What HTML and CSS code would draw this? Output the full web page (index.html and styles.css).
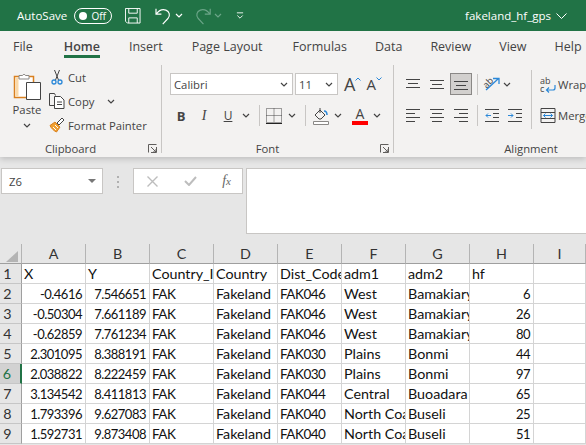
FILE: index.html
```html
<!DOCTYPE html>
<html lang="en">
<head>
    <meta charset="UTF-8">
    <meta name="viewport" content="width=device-width, initial-scale=1.0">
    <title>fakeland_hf_gps</title>
    <link rel="stylesheet" href="styles.css">
</head>
<body>
    <svg class="sprite" width="0" height="0">
        <symbol id="chev" viewBox="0 0 8 5"><path d="M1 1l3 3 3-3" fill="none" stroke="currentColor" stroke-width="1.2"/></symbol>
        <symbol id="launch" viewBox="0 0 9 9"><path d="M.5 8.5V.5h8M8.5 3v5.5H3M3 3l5 5M8 5v3H5" fill="none" stroke="#605e5c"/></symbol>
    </svg>

    <header class="titlebar">
        <span class="autosave">AutoSave</span>
        <span class="toggle"><i class="knob"></i><b>Off</b></span>
        <svg class="qat-save" width="16" height="16" viewBox="0 0 17 17" fill="none" stroke="#fff"><path d="M.5.500h15.500v15.500H2.500l-2-2zM4 .5v5h9v-5M4 16v-5.500h9V16"/></svg>
        <svg class="qat-undo" width="20" height="18" viewBox="0 0 22 20" fill="none" stroke="#fff" stroke-width="1.300"><path d="M1 2v6h6M1.500 7.500C5 3 9 2.500 12 3.500c4 1.500 5 6 2.500 9L8.500 19"/></svg>
        <svg class="qat-chev" width="8" height="5"><use href="#chev"/></svg>
        <svg class="qat-redo" width="18" height="18" viewBox="0 0 20 20" fill="none" stroke="#6ba588" stroke-width="1.300"><path d="M18 2v6h-6M17.500 7.500C14 3 10 2.500 7 3.500c-4 1.500-5 6-2.500 9l6 6.500"/></svg>
        <svg class="qat-chev off" width="8" height="5"><use href="#chev"/></svg>
        <svg class="qat-more" width="8" height="9" viewBox="0 0 9 9" fill="none" stroke="#fff"><path d="M1 1.500h7M1.500 4.500L4.500 7.500 7.500 4.500"/></svg>
        <span class="filename">fakeland_hf_gps</span>
        <svg class="file-chev" width="11" height="6" viewBox="0 0 11 6" fill="none" stroke="#fff"><path d="M.5.500l5 5 5-5"/></svg>
    </header>

    <nav class="tabs">
        <span class="tab t-file">File</span>
        <span class="tab t-home">Home</span>
        <span class="tab t-insert">Insert</span>
        <span class="tab t-layout">Page Layout</span>
        <span class="tab t-formulas">Formulas</span>
        <span class="tab t-data">Data</span>
        <span class="tab t-review">Review</span>
        <span class="tab t-view">View</span>
        <span class="tab t-help">Help</span>
    </nav>

    <section class="ribbon">
        <div class="group g-clip">
            <div class="group-body clip-body">
                <div class="paste">
                    <svg width="28" height="27" viewBox="0 0 28 27">
                        <path d="M1.500 3.500h19v21h-19z" fill="#fff" stroke="#d9801f" stroke-width="1.500"/>
                        <path d="M2.500 4.500h3v19h-3z" fill="#fbd9a8"/>
                        <path d="M6 4V2.500h3.500C10 1 12 1 12.500 2.500H16V6H6z" fill="#fff" stroke="#8a8886"/>
                        <path d="M13.500 9.500h14v17h-14z" fill="#fff" stroke="#444"/>
                    </svg>
                    <span class="paste-label">Paste</span>
                    <svg class="ink" width="8" height="5"><use href="#chev"/></svg>
                </div>
                <div class="clip-list">
                    <div class="clip-row">
                        <svg width="16" height="16" viewBox="0 0 16 16" fill="none"><path d="M5.500 1l4 10M10.500 1l-4 10" stroke="#444"/><circle cx="5" cy="13" r="2" stroke="#2b88d8" stroke-width="1.300"/><circle cx="11" cy="13" r="2" stroke="#2b88d8" stroke-width="1.300"/></svg>
                        <span>Cut</span>
                    </div>
                    <div class="clip-row">
                        <svg width="16" height="16" viewBox="0 0 16 16" fill="none" stroke="#444"><path d="M6.500 12.500H.5v-12h5l1 2"/><path d="M5.500 3.500h6l3.500 3.500v8.500H5.500z" fill="#fff"/><path d="M8 9h5M8 11.500h5"/></svg>
                        <span>Copy</span>
                        <svg class="copy-chev ink" width="8" height="5"><use href="#chev"/></svg>
                    </div>
                    <div class="clip-row">
                        <svg width="16" height="16" viewBox="0 0 16 16"><path d="M1 8.500L6 5l5 5-3.500 5C5 14 2 11 1 8.500z" fill="#f0a030" stroke="#d9801f"/><path d="M4 10l3 3M6 8l3 3" stroke="#fff"/><path d="M8 6l5-5 2 2-5 5z" fill="#fff" stroke="#444"/></svg>
                        <span>Format Painter</span>
                    </div>
                </div>
            </div>
            <div class="group-label"><span>Clipboard</span><svg width="9" height="9"><use href="#launch"/></svg></div>
        </div>

        <div class="group g-font">
            <div class="group-body">
                <div class="font-row">
                    <div class="combo c-name"><span>Calibri</span><svg class="ink" width="8" height="5"><use href="#chev"/></svg></div>
                    <div class="combo c-size"><span>11</span><svg class="ink" width="8" height="5"><use href="#chev"/></svg></div>
                    <span class="grow">A<svg width="6" height="4" viewBox="0 0 6 4" fill="none" stroke="#2b88d8"><path d="M.5 3.500L3 1l2.500 2.500"/></svg></span>
                    <span class="shrink">A<svg width="6" height="4" viewBox="0 0 6 4" fill="none" stroke="#2b88d8"><path d="M.5.500L3 3 5.500.500"/></svg></span>
                </div>
                <div class="font-tools">
                    <b class="t-b">B</b>
                    <i class="t-i">I</i>
                    <u class="t-u">U</u>
                    <svg class="ink" width="8" height="5"><use href="#chev"/></svg>
                    <span class="sep"></span>
                    <svg width="16" height="16" viewBox="0 0 16 16" fill="none"><path d="M.5.500h15v14H.5zM8 .5v14M.5 7.500h15" stroke="#444" stroke-dasharray="1 1"/><path d="M0 15.500h16" stroke="#222"/></svg>
                    <svg class="ink" width="8" height="5"><use href="#chev"/></svg>
                    <span class="sep"></span>
                    <svg width="16" height="18" viewBox="0 0 16 18" fill="none"><path d="M2 8l5-5 5 5-4 4H6z" stroke="#444"/><path d="M7 1v5" stroke="#444"/><path d="M11 4c2 0 3 2 3 4" stroke="#2b88d8" stroke-width="1.500"/><path d="M.5 14.500h15v3H.5z" fill="#fff" stroke="#8a8886"/></svg>
                    <svg class="ink" width="8" height="5"><use href="#chev"/></svg>
                    <span></span>
                    <span class="t-color">A<i></i></span>
                    <svg class="ink" width="8" height="5"><use href="#chev"/></svg>
                </div>
            </div>
            <div class="group-label"><span>Font</span><svg width="9" height="9"><use href="#launch"/></svg></div>
        </div>

        <div class="group g-align">
            <div class="group-body align-grid">
                <span class="a-btn"><svg width="14" height="11" viewBox="0 0 14 11" stroke="#444"><path d="M0 .5h14M2 4.500h10M0 8.500h14"/></svg></span>
                <span class="a-btn"><svg width="14" height="11" viewBox="0 0 14 11" stroke="#444"><path d="M0 1.500h14M2 5.500h10M0 9.500h14"/></svg></span>
                <span class="a-btn selected"><svg width="14" height="11" viewBox="0 0 14 11" stroke="#444"><path d="M0 2.500h14M2 6.500h10M0 10.500h14"/></svg></span>
                <span class="sep"></span>
                <span class="a-btn"><svg width="18" height="18" viewBox="0 0 18 18" fill="none"><path d="M3 15L15 4M10 3.500h6V9" stroke="#2b88d8" stroke-width="1.300"/><text x="0" y="11" class="ab" transform="rotate(-45 5 8)">ab</text></svg></span>
                <svg class="ink chev-start" width="8" height="5"><use href="#chev"/></svg>
                <span class="sep tall"></span>
                <span class="a-wide"><svg width="16" height="17" viewBox="0 0 16 17" fill="none"><text x="0" y="8" class="ab">ab</text><text x="0" y="16" class="ab">c</text><path d="M15 9v3q0 2-2 2H7M9 11.500L6.500 14 9 16.500" stroke="#2b88d8" stroke-width="1.200"/></svg>Wrap</span>

                <span class="a-btn"><svg width="14" height="13" viewBox="0 0 14 13" stroke="#444"><path d="M0 .5h14M0 4.500h9M0 8.500h14M0 12.500h9"/></svg></span>
                <span class="a-btn"><svg width="14" height="13" viewBox="0 0 14 13" stroke="#444"><path d="M0 .5h14M2 4.500h10M0 8.500h14M2 12.500h10"/></svg></span>
                <span class="a-btn"><svg width="14" height="13" viewBox="0 0 14 13" stroke="#444"><path d="M0 .5h14M5 4.500h9M0 8.500h14M5 12.500h9"/></svg></span>
                <span class="sep"></span>
                <span class="a-btn"><svg width="14" height="13" viewBox="0 0 14 13" fill="none"><path d="M0 .5h14M8 4.500h6M8 8.500h6M0 12.500h14" stroke="#444"/><path d="M6 6.500H1M3 4.500l-2 2 2 2" stroke="#2b88d8"/></svg></span>
                <span class="a-btn"><svg width="14" height="13" viewBox="0 0 14 13" fill="none"><path d="M0 .5h14M8 4.500h6M8 8.500h6M0 12.500h14" stroke="#444"/><path d="M0 6.500h5M3 4.500l2 2-2 2" stroke="#2b88d8"/></svg></span>
                <span class="a-wide"><svg width="16" height="15" viewBox="0 0 15 15" fill="none"><path d="M.5.500h14v14H.5z" stroke="#444"/><path d="M.5 4.500h14M.5 10.500h14" stroke="#444"/><path d="M3 7.500h9M5 5.500l-2 2 2 2M10 5.500l2 2-2 2" stroke="#2b88d8"/></svg>Merge</span>
            </div>
            <div class="group-label"><span>Alignment</span></div>
        </div>
    </section>

    <section class="formula-area">
        <div class="namebox"><span>Z6</span><i class="caret"></i></div>
        <div class="grip"><i></i><i></i><i></i></div>
        <div class="fx-box">
            <svg width="11" height="11" viewBox="0 0 11 11" fill="none" stroke="#bdbdbd" stroke-width="1.400"><path d="M.5.500l10 10M10.500.500l-10 10"/></svg>
            <svg width="13" height="10" viewBox="0 0 13 10" fill="none" stroke="#bdbdbd" stroke-width="2"><path d="M1 5l4 4 7-8"/></svg>
            <span class="fx"><i>f</i><i class="x">x</i></span>
        </div>
        <div class="formula-input"></div>
    </section>

    <table class="sheet">
        <colgroup>
            <col class="col-head"><col class="col-w"><col class="col-w"><col class="col-w"><col class="col-w"><col class="col-w"><col class="col-w"><col class="col-w"><col class="col-w"><col>
        </colgroup>
        <tr class="heads"><th class="corner"><i></i></th><th>A</th><th>B</th><th>C</th><th>D</th><th>E</th><th>F</th><th>G</th><th>H</th><th>I</th></tr>
        <tr><th>1</th><td>X</td><td>Y</td><td>Country_ID</td><td>Country</td><td>Dist_Code</td><td>adm1</td><td>adm2</td><td>hf</td><td></td></tr>
        <tr><th>2</th><td class="num">-0.4616</td><td class="num">7.546651</td><td class="code">FAK</td><td>Fakeland</td><td class="code">FAK046</td><td>West</td><td>Bamakiary</td><td class="num">6</td><td></td></tr>
        <tr><th>3</th><td class="num">-0.50304</td><td class="num">7.661189</td><td class="code">FAK</td><td>Fakeland</td><td class="code">FAK046</td><td>West</td><td>Bamakiary</td><td class="num">26</td><td></td></tr>
        <tr><th>4</th><td class="num">-0.62859</td><td class="num">7.761234</td><td class="code">FAK</td><td>Fakeland</td><td class="code">FAK046</td><td>West</td><td>Bamakiary</td><td class="num">80</td><td></td></tr>
        <tr><th>5</th><td class="num">2.301095</td><td class="num">8.388191</td><td class="code">FAK</td><td>Fakeland</td><td class="code">FAK030</td><td>Plains</td><td>Bonmi</td><td class="num">44</td><td></td></tr>
        <tr><th class="active">6</th><td class="num">2.038822</td><td class="num">8.222459</td><td class="code">FAK</td><td>Fakeland</td><td class="code">FAK030</td><td>Plains</td><td>Bonmi</td><td class="num">97</td><td></td></tr>
        <tr><th>7</th><td class="num">3.134542</td><td class="num">8.411813</td><td class="code">FAK</td><td>Fakeland</td><td class="code">FAK044</td><td>Central</td><td>Buoadara</td><td class="num">65</td><td></td></tr>
        <tr><th>8</th><td class="num">1.793396</td><td class="num">9.627083</td><td class="code">FAK</td><td>Fakeland</td><td class="code">FAK040</td><td>North Coast</td><td>Buseli</td><td class="num">25</td><td></td></tr>
        <tr><th>9</th><td class="num">1.592731</td><td class="num">9.873408</td><td class="code">FAK</td><td>Fakeland</td><td class="code">FAK040</td><td>North Coast</td><td>Buseli</td><td class="num">51</td><td></td></tr>
    </table>
</body>
</html>
```

FILE: styles.css
```css
html, body {
    margin: 0;
    height: 445px;
    overflow: hidden;
}
body {
    width: 586px;
    background: #e6e6e6;
    font-family: "Open Sans", sans-serif;
    font-size: 11.3px;
    color: #444;
}
.sprite {
    position: absolute;
}
svg {
    display: block;
    flex: none;
}
.ink {
    color: #444;
}

/* title bar */
.titlebar {
    display: flex;
    align-items: center;
    height: 31px;
    padding-left: 17px;
    background: #217346;
    color: #fff;
    font-size: 11.5px;
}
.autosave {
    width: 57px;
}
.toggle {
    display: flex;
    align-items: center;
    justify-content: space-between;
    box-sizing: border-box;
    width: 38px;
    height: 16px;
    padding: 0 5px 0 4px;
    border: 1px solid #fff;
    border-radius: 8px;
    font-size: 10px;
}
.toggle b {
    font-weight: 400;
}
.knob {
    width: 8px;
    height: 8px;
    border-radius: 50%;
    background: #fff;
}
.qat-save {
    margin-left: 13px;
}
.qat-undo {
    margin-left: 14px;
}
.qat-chev {
    color: #fff;
}
.qat-chev.off {
    color: #6ba588;
    margin-left: 2px;
}
.qat-redo {
    margin-left: 11px;
}
.qat-more {
    margin-left: 14px;
}
.filename {
    margin-left: auto;
}
.file-chev {
    margin: 0 19px 0 5px;
}

/* tabs */
.tabs {
    display: flex;
    height: 27px;
    background: #f3f2f1;
    font-size: 12.5px;
}
.tab {
    line-height: 32px;
    height: 27px;
    box-sizing: border-box;
}
.t-file { margin-left: 13px; }
.t-home {
    margin-left: 31px;
    font-weight: 600;
    border-bottom: 3px solid #217346;
    color: #444;
    line-height: 32px;
}
.t-insert { margin-left: 29px; }
.t-layout { margin-left: 29px; }
.t-formulas { margin-left: 30px; }
.t-data { margin-left: 28px; }
.t-review { margin-left: 28px; }
.t-view { margin-left: 28px; }
.t-help { margin-left: 28px; }

/* ribbon */
.ribbon {
    position: relative;
    z-index: 1;
    display: flex;
    box-sizing: border-box;
    height: 99px;
    padding-top: 7px;
    background: #f3f2f1;
    box-shadow: 0 2px 6px rgba(0, 0, 0, 0.18);
    overflow: hidden;
    clip-path: inset(0 0 -10px 0);
}
.group {
    display: flex;
    flex-direction: column;
    flex: none;
    height: 88px;
    border-right: 1px solid #c8c6c4;
}
.g-clip { width: 161px; }
.g-font { width: 231px; }
.g-align {
    width: 278px;
    border-right: none;
}
.group-body {
    height: 76px;
    flex: none;
}
.group-label {
    display: flex;
    align-items: center;
    height: 16px;
    padding-right: 4px;
}
.group-label span {
    flex: 1;
    text-align: center;
}
.group-label svg {
    margin-left: 7px;
}

.clip-body {
    display: flex;
}
.paste {
    display: flex;
    flex-direction: column;
    align-items: center;
    box-sizing: border-box;
    width: 49px;
    padding: 8px 0 0 5px;
}
.paste-label {
    margin-top: 1px;
    line-height: 18px;
}
.paste .ink {
    margin-top: 4px;
}
.clip-row {
    display: flex;
    align-items: center;
    height: 24px;
    gap: 3px;
}
.copy-chev {
    margin-left: 10px;
}

.font-row {
    display: flex;
    align-items: center;
    height: 22px;
    margin-top: 8px;
    padding-left: 8px;
}
.combo {
    display: flex;
    align-items: center;
    justify-content: space-between;
    box-sizing: border-box;
    height: 22px;
    padding: 0 4px 0 3px;
    background: #fff;
    border: 1px solid #c8c6c4;
}
.c-name {
    width: 123px;
    margin-right: 2px;
}
.c-size {
    width: 43px;
}
.grow, .shrink {
    display: flex;
    align-items: flex-start;
    line-height: 22px;
}
.grow {
    margin-left: 6px;
    font-size: 18px;
}
.shrink {
    margin-left: 5px;
    font-size: 15px;
}
.shrink svg, .grow svg {
    margin-top: 4px;
}
.font-tools {
    display: grid;
    grid-template-columns: 22px 24px 24px 12px 14px 16px 20px 6px 26px 8px 8px 20px 14px;
    align-items: center;
    justify-items: center;
    height: 21px;
    margin-top: 10px;
    padding-left: 8px;
}
.t-b {
    font-size: 13px;
    font-weight: 700;
}
.t-i {
    font-family: "Liberation Serif", serif;
    font-size: 14px;
}
.t-u {
    font-size: 12px;
}
.sep {
    display: block;
    width: 1px;
    height: 21px;
    background: #c8c6c4;
}
.t-color {
    position: relative;
    display: block;
    width: 16px;
    height: 18px;
    font-size: 14px;
    line-height: 14px;
    text-align: center;
}
.t-color i {
    display: block;
    height: 4px;
    background: #f00;
}

.align-grid {
    display: grid;
    grid-template-columns: 24px 24px 24px 8px 22px 24px 8px 1fr;
    grid-template-rows: 22px 20px;
    row-gap: 10px;
    padding: 8px 0 0 7px;
    box-sizing: border-box;
    align-items: center;
    justify-items: center;
}
.a-btn {
    display: flex;
    align-items: center;
    justify-content: center;
    width: 22px;
    height: 22px;
    box-sizing: border-box;
}
.a-btn.selected {
    background: #d2d0ce;
    border: 1px solid #8a8886;
}
.chev-start {
    justify-self: start;
}
.sep.tall {
    grid-column: 7;
    grid-row: 1 / 3;
    height: 59px;
}
.a-wide {
    display: flex;
    align-items: center;
    justify-self: start;
    gap: 2px;
    margin-left: 5px;
    white-space: nowrap;
}
.ab {
    font-family: "Open Sans", sans-serif;
    font-size: 9px;
    fill: #444;
}

/* formula bar */
.formula-area {
    display: flex;
    align-items: flex-start;
    box-sizing: border-box;
    height: 87px;
    padding: 11px 0 0 1px;
    background: #e6e6e6;
}
.namebox {
    display: flex;
    align-items: center;
    justify-content: space-between;
    box-sizing: border-box;
    width: 102px;
    height: 26px;
    padding: 0 6px 0 7px;
    background: #fff;
    border: 1px solid #c8c6c4;
}
.caret {
    border: 4px solid transparent;
    border-top: 4px solid #777;
    border-bottom: none;
}
.grip {
    display: flex;
    flex-direction: column;
    align-items: center;
    gap: 3px;
    width: 30px;
    padding-top: 8px;
}
.grip i {
    width: 2px;
    height: 2px;
    background: #b0b0b0;
}
.fx-box {
    display: flex;
    align-items: center;
    justify-content: space-between;
    box-sizing: border-box;
    width: 110px;
    height: 26px;
    padding: 0 11px 0 13px;
    background: #fff;
    border: 1px solid #c8c6c4;
}
.fx {
    font-family: "Liberation Serif", serif;
    font-size: 14px;
    color: #666;
}
.fx .x {
    font-size: 11px;
}
.formula-input {
    flex: 1;
    height: 66px;
    margin-left: 3px;
    background: #fff;
    border: 1px solid #c8c6c4;
    border-right: none;
    box-sizing: border-box;
}

/* grid */
.sheet {
    table-layout: fixed;
    width: 586px;
    border-collapse: separate;
    border-spacing: 0;
    font-family: Lato, sans-serif;
    font-size: 14.3px;
    color: #111;
}
.col-head { width: 22px; }
.col-w { width: 64px; }
.sheet th, .sheet td {
    box-sizing: border-box;
    height: 20px;
    padding: 1px 2px 0;
    overflow: hidden;
    white-space: nowrap;
    line-height: 18px;
}
.sheet td {
    background: #fff;
    border-right: 1px solid #d4d4d4;
    border-bottom: 1px solid #d4d4d4;
}
.sheet th {
    background: #e6e6e6;
    font-weight: 400;
    color: #333;
    border-right: 1px solid #9f9f9f;
    border-bottom: 1px solid #c6c6c6;
    padding: 1px 6px 0 0;
}
.heads th {
    border-right: 1px solid #b4b4b4;
    border-bottom: 1px solid #9f9f9f;
    padding: 0;
}
.sheet td.num {
    text-align: right;
    padding-right: 3px;
    font-size: 13px;
    letter-spacing: -0.5px;
}
.sheet td.code {
    font-size: 13.5px;
    letter-spacing: -0.5px;
}
.sheet th.active {
    background: #d2d2d2;
    color: #217346;
    border-right: 2px solid #217346;
}
.corner i {
    display: block;
    width: 0;
    margin: 5px 0 0 6px;
    border-left: 12px solid transparent;
    border-bottom: 11px solid #b4b4b4;
}
```
